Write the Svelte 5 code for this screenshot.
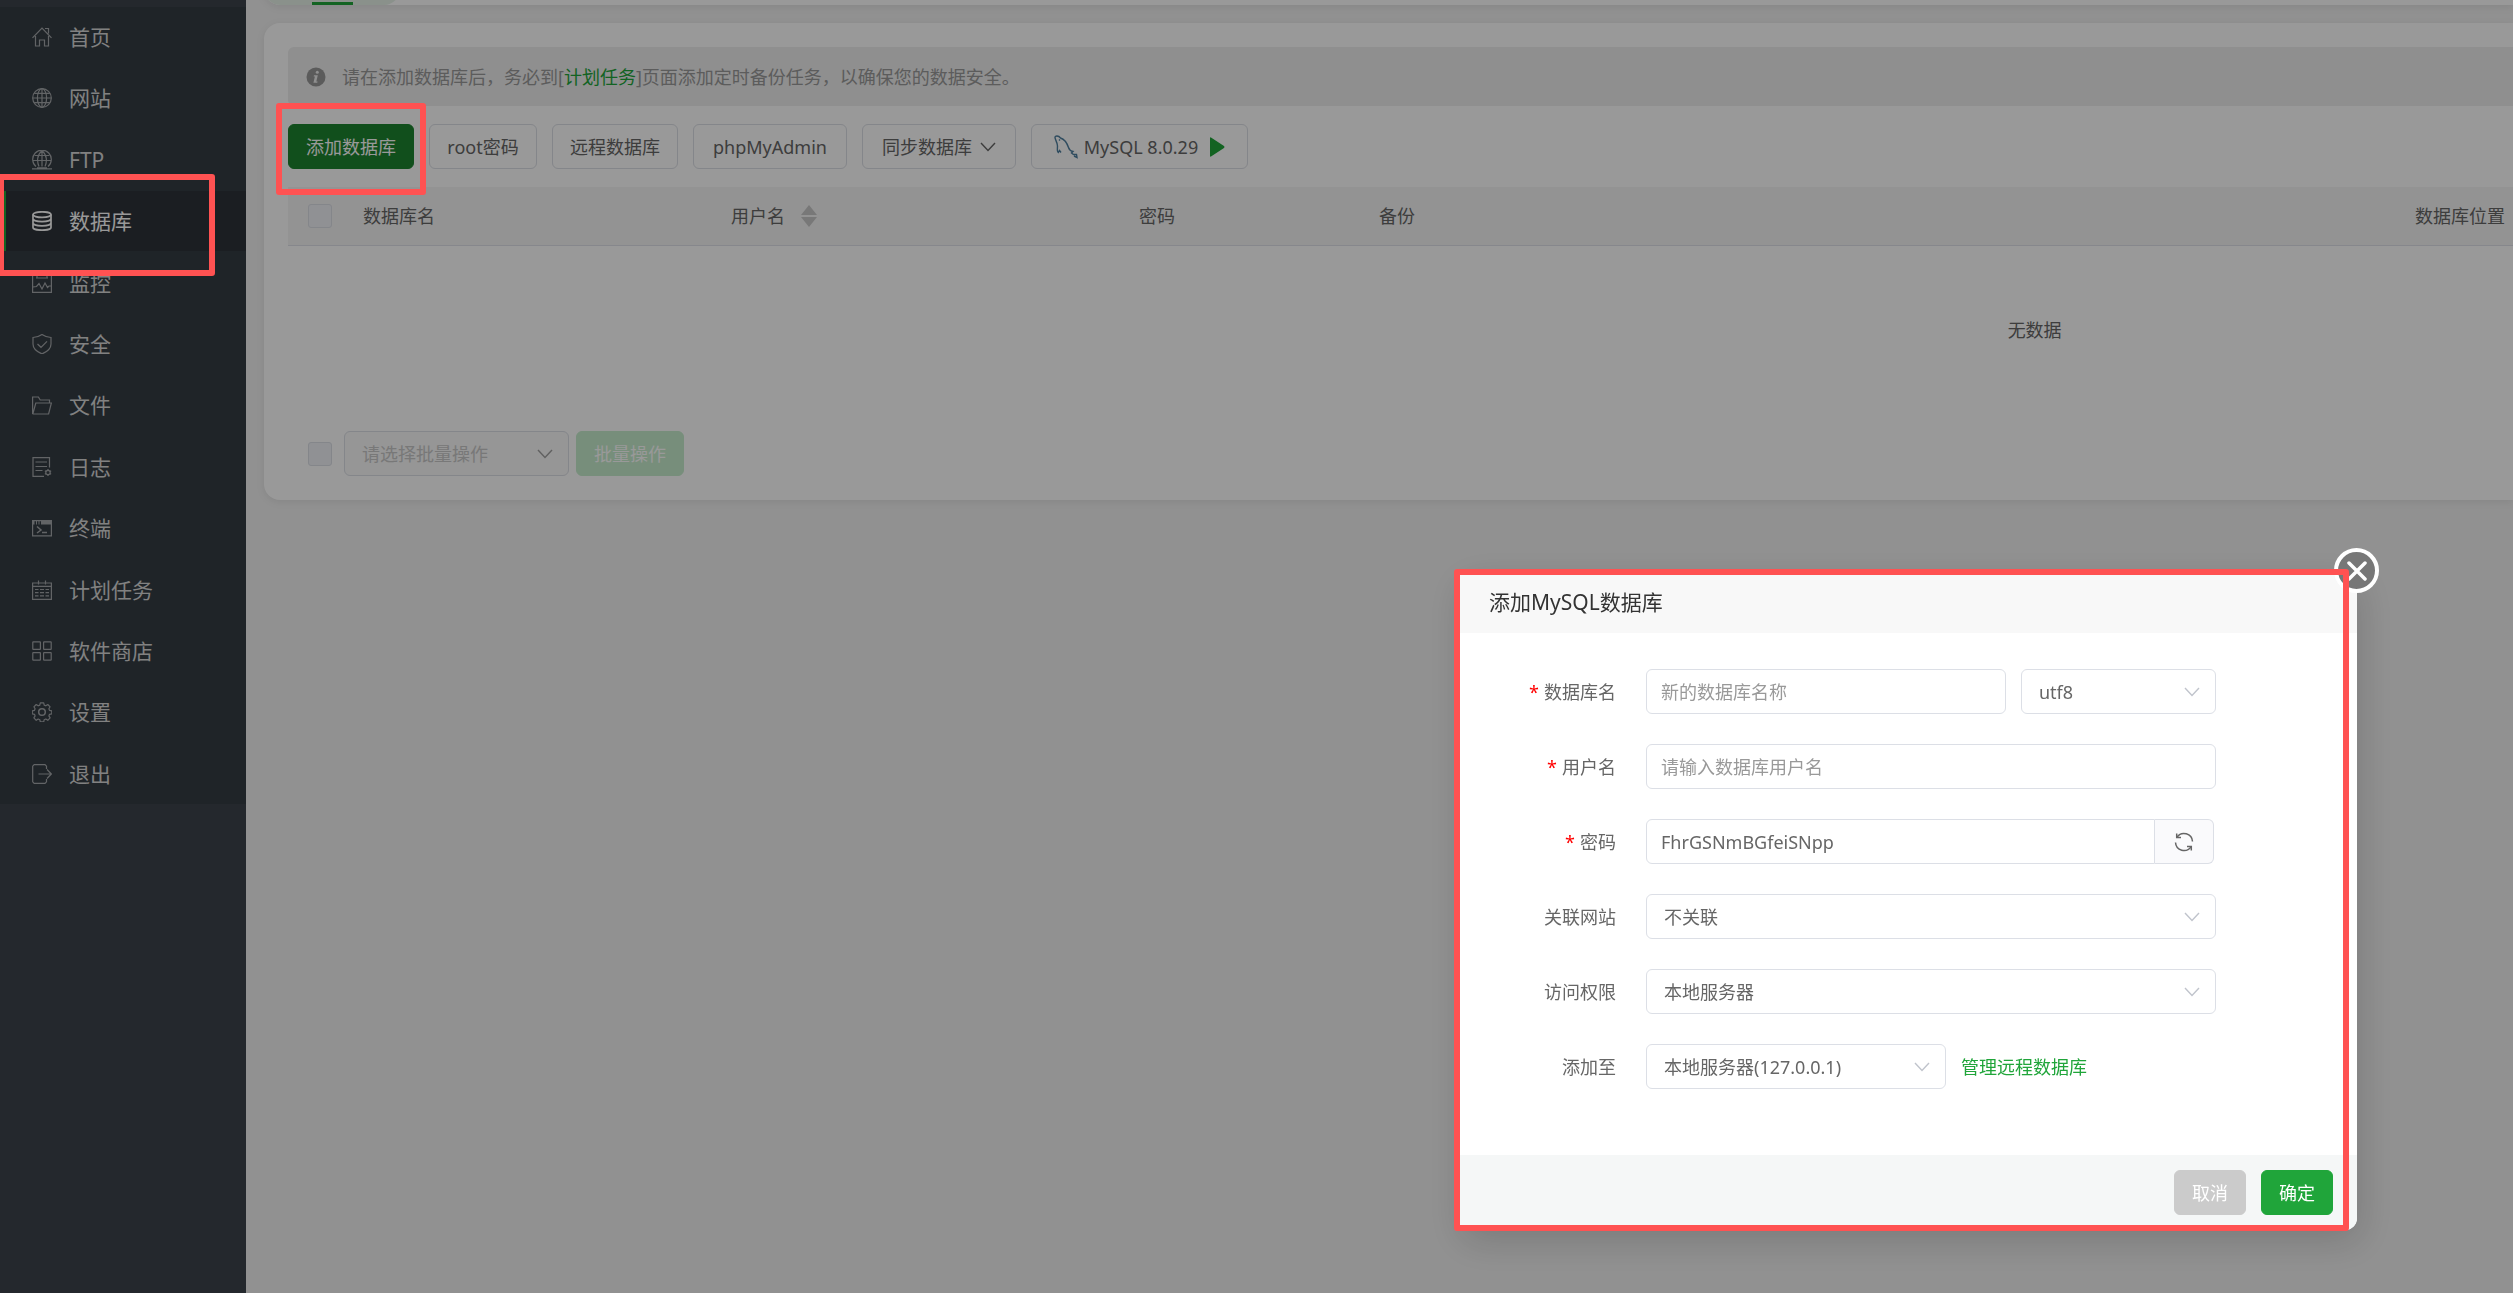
<script>
	const menu = [
		{ id: 'home', title: '首页' },
		{ id: 'site', title: '网站' },
		{ id: 'ftp', title: 'FTP' },
		{ id: 'database', title: '数据库' },
		{ id: 'monitor', title: '监控' },
		{ id: 'security', title: '安全' },
		{ id: 'files', title: '文件' },
		{ id: 'logs', title: '日志' },
		{ id: 'terminal', title: '终端' },
		{ id: 'cron', title: '计划任务' },
		{ id: 'store', title: '软件商店' },
		{ id: 'settings', title: '设置' },
		{ id: 'logout', title: '退出' }
	];

	let active = 'database';
	let showModal = true;

	let dbName = '';
	let userName = '';
	let password = 'FhrGSNmBGfeiSNpp';

	function refreshPassword() {
		const chars = 'ABCDEFGHJKMNPQRSTWXYZabcdefhijkmnprstwxyz2345678';
		password = Array.from({ length: 16 }, () => chars[Math.floor(Math.random() * chars.length)]).join('');
	}
</script>

{#snippet chevron()}
	<svg class="chevron" width="16" height="10" viewBox="0 0 16 10" fill="none" stroke="currentColor" stroke-width="1.4">
		<path d="M1 1l7 7.5L15 1" />
	</svg>
{/snippet}

{#snippet menuIcon(id)}
	<svg class="icon" width="20" height="20" viewBox="0 0 20 20" fill="none" stroke="currentColor" stroke-width="1.2">
		{#if id === 'home'}
			<path d="M.5 10.8L10 1l9.500 9.800M13 1.500h3.500v5M3.500 9v10h4v-6h5v6h4V9" />
		{:else if id === 'site'}
			<circle cx="10" cy="10" r="9.300" />
			<ellipse cx="10" cy="10" rx="4.600" ry="9.300" />
			<path d="M10 .7v18.600M.7 10h18.600M2.200 5.300h15.600M2.200 14.700h15.600" />
		{:else if id === 'ftp'}
			<path d="M4 16.500A9.300 9.300 0 1 1 16 16.500" />
			<path d="M7 16.500c-2.300-5-2-12 3-15.800 5 3.800 5.300 10.800 3 15.800M10 .7v15.800M1 10.500h18M2.600 5.500h14.800" />
			<path d="M0 18.800h20M5 17.800h10" />
		{:else if id === 'database'}
			<g stroke-width="1.700">
				<ellipse cx="10" cy="3.600" rx="9" ry="2.800" />
				<path d="M1 3.600v12.800c0 1.600 4 2.800 9 2.800s9-1.200 9-2.800V3.600M1 7.800c0 1.600 4 2.800 9 2.800s9-1.200 9-2.800M1 12.100c0 1.600 4 2.800 9 2.800s9-1.200 9-2.800" />
			</g>
		{:else if id === 'monitor'}
			<path d="M.6 1.600h18.800v17.800H.6zM4 5h12M5 1.600v3.400M15 1.600v3.400M1 14l3.500-.5 2.500-3 3 5.500 3-6 2.500 4.500 1.500-1.500h2" />
		{:else if id === 'security'}
			<path d="M10 .6c2.800 2 5.800 2.700 9 2.900v6.500c0 4.500-4 7.800-9 9.900-5-2.100-9-5.400-9-9.900V3.500C4.200 3.300 7.200 2.600 10 .6zM5.500 10l3.500 3.300 6-6" />
		{:else if id === 'files'}
			<path d="M.6 19V2h5.800l1.800 3h9.300v2.800M.6 19h16l2.800-11H3.800L.8 19" />
		{:else if id === 'logs'}
			<path d="M12 19.400H1V.6h16.500v10M3.500 5h11.500M3.500 9.500h11.500M3.500 13.500h7" />
			<circle cx="16" cy="15.500" r="2.200" />
			<path d="M16 12v1.200M16 17.800V19M12.900 13.700l1.100.7M18 16.600l1.100.7M12.900 17.300l1.100-.7M18 14.400l1.100-.7" />
		{:else if id === 'terminal'}
			<path d="M.6 2.600h18.800v15.300H.6z" />
			<path d="M1 4.700h1.500M4 4.700h1M6.500 4.700h1M9 4.700h11" stroke-width="3.600" />
			<path d="M5 8.500l4 3.500-4 3M10 14.500h5" stroke-width="1.500" />
		{:else if id === 'cron'}
			<path d="M.6 3h18.800v16.400H.6zM6.500.5v4M13.500.5v4M.6 6.300h18.800M3 9.500h3.500M8 9.500h4M13.500 9.500H17M3 12.700h3.500M8 12.700h4M13.500 12.700H17M3 15.900h3.500M8 15.900h4M13.500 15.900H17" />
		{:else if id === 'store'}
			<rect x=".8" y=".8" width="7.600" height="7.600" rx=".5" />
			<rect x="11.600" y=".8" width="7.600" height="7.600" rx=".5" />
			<rect x=".8" y="11.600" width="7.600" height="7.600" rx=".5" />
			<rect x="11.600" y="11.600" width="7.600" height="7.600" rx=".5" />
		{:else if id === 'settings'}
			<circle cx="10" cy="10" r="3.300" stroke-width="1.500" />
			<path d="M8.300.8h3.400l.5 2.300 1.600.7 2-1.300 2.300 2.300-1.200 2 .6 1.600 2.300.5v2.900l-2.300.5-.6 1.600 1.200 2-2.300 2.400-2-1.300-1.600.7-.5 2.200H8.300l-.5-2.200-1.600-.7-2 1.300-2.300-2.400 1.200-2-.6-1.600-2.200-.5V8.900l2.200-.5.6-1.600-1.200-2 2.300-2.300 2 1.300 1.600-.7z" stroke-linejoin="round" />
		{:else if id === 'logout'}
			<path d="M14.500 5V2.200L13 .7H2.200L.7 2.200v15.600l1.500 1.500H13l1.500-1.500V15M6.500 10h12.500M15 5.500l4.300 4.500-4.300 4.500" />
		{/if}
	</svg>
{/snippet}

<div class="layout">
	<aside class="sidebar">
		<ul class="menu">
			{#each menu as item}
				<li class="menu-item" class:active={item.id === active}>
					<a href="#{item.id}">
						{@render menuIcon(item.id)}
						<span>{item.title}</span>
					</a>
					{#if item.id === 'database'}
						<div class="mark mark-menu"></div>
					{/if}
				</li>
			{/each}
		</ul>
	</aside>

	<main class="main">
		<div class="tabs">
			<div class="tab"></div>
		</div>

		<section class="panel">
			<div class="notice">
				<svg width="20" height="20" viewBox="0 0 20 20">
					<circle cx="10" cy="10" r="9.500" fill="#989898" />
					<circle cx="11.300" cy="5.200" r="1.500" fill="#eee" />
					<path d="M8 8.300h3.800l-1.500 6.200h1.300l-.3 1.200H7.400l1.500-6.200H7.700z" fill="#eee" />
				</svg>
				<p>请在添加数据库后，务必到[<a href="#cron">计划任务</a>]页面添加定时备份任务，以确保您的数据安全。</p>
			</div>

			<div class="toolbar">
				<div class="marked">
					<button class="btn btn-add" on:click={() => (showModal = true)}>添加数据库</button>
					<div class="mark mark-add"></div>
				</div>
				<button class="btn btn-root">root密码</button>
				<button class="btn">远程数据库</button>
				<button class="btn btn-admin">phpMyAdmin</button>
				<button class="btn btn-sync">同步数据库 {@render chevron()}</button>
				<button class="btn btn-mysql">
					<svg width="24" height="24" viewBox="0 0 24 24" fill="none" stroke="#4f7f9f" stroke-width="1.400">
						<path d="M7 17.500l-1.500-2-1.200 2C2.800 16.500 3.500 13 3.500 11 3.500 7.500 1 4.500 1 2.500 1 .5 4.500.5 6.500 3c4.500 1.500 6.500 5 8 9.500.8 2.500 2 3.500 4.500 4l-1.500 1.500 2 1.500h3l.5 3-3-1.500" />
						<path d="M5 4.500l1 1" />
					</svg>
					MySQL 8.0.29
					<svg width="15" height="20" viewBox="0 0 15 20"><path d="M0 1q0-1 1-.5l13 8.500q1 1 0 2L1 19.500q-1 .5-1-.5z" fill="#20a53a" /></svg>
				</button>
			</div>

			<table class="table">
				<colgroup>
					<col class="col-check" />
					<col class="col-name" />
					<col class="col-user" />
					<col class="col-pass" />
					<col class="col-backup" />
					<col />
				</colgroup>
				<thead>
					<tr>
						<th class="check"><input type="checkbox" aria-label="全选" /></th>
						<th>数据库名</th>
						<th>
							<span class="sort">
								用户名
								<svg width="16" height="22" viewBox="0 0 16 22" fill="#c8c8c8"><path d="M8 0l8 10H0zM8 22l8-10H0z" /></svg>
							</span>
						</th>
						<th>密码</th>
						<th>备份</th>
						<th>数据库位置</th>
					</tr>
				</thead>
				<tbody>
					<tr>
						<td class="empty" colspan="6">无数据</td>
					</tr>
				</tbody>
			</table>

			<div class="batch">
				<input type="checkbox" aria-label="选择全部数据库" />
				<div class="select select-batch">
					<select disabled aria-label="批量操作">
						<option>请选择批量操作</option>
					</select>
					{@render chevron()}
				</div>
				<button class="btn btn-batch" disabled>批量操作</button>
			</div>
		</section>
	</main>
</div>

{#if showModal}
	<div class="mask"></div>

	<div class="modal" role="dialog" aria-labelledby="modal-title">
		<h2 class="modal-title" id="modal-title">添加MySQL数据库</h2>

		<div class="form">
			<div class="row">
				<label for="db-name"><i>*</i>数据库名</label>
				<div class="field">
					<input class="input" id="db-name" type="text" placeholder="新的数据库名称" bind:value={dbName} />
					<div class="select select-charset">
						<select aria-label="字符集">
							<option>utf8</option>
						</select>
						{@render chevron()}
					</div>
				</div>
			</div>
			<div class="row">
				<label for="db-user"><i>*</i>用户名</label>
				<div class="field">
					<input class="input" id="db-user" type="text" placeholder="请输入数据库用户名" bind:value={userName} />
				</div>
			</div>
			<div class="row">
				<label for="db-pass"><i>*</i>密码</label>
				<div class="field field-pass">
					<input class="input" id="db-pass" type="text" bind:value={password} />
					<button class="refresh" aria-label="随机密码" on:click={refreshPassword}>
						<svg width="20" height="20" viewBox="0 0 20 20" fill="none" stroke="currentColor" stroke-width="1.500">
							<path d="M3 5.200A8.500 8.500 0 0 1 18.500 9.500M17 14.800A8.500 8.500 0 0 1 1.500 10.500" />
							<path d="M2.700 1.500v4h4.300M17.300 18.500v-4H13" />
						</svg>
					</button>
				</div>
			</div>
			<div class="row">
				<label for="db-site">关联网站</label>
				<div class="field">
					<div class="select">
						<select id="db-site"><option>不关联</option></select>
						{@render chevron()}
					</div>
				</div>
			</div>
			<div class="row">
				<label for="db-access">访问权限</label>
				<div class="field">
					<div class="select">
						<select id="db-access"><option>本地服务器</option></select>
						{@render chevron()}
					</div>
				</div>
			</div>
			<div class="row">
				<label for="db-server">添加至</label>
				<div class="field">
					<div class="select select-server">
						<select id="db-server"><option>本地服务器(127.0.0.1)</option></select>
						{@render chevron()}
					</div>
					<a href="#remote">管理远程数据库</a>
				</div>
			</div>
		</div>

		<div class="modal-footer">
			<button class="btn btn-cancel" on:click={() => (showModal = false)}>取消</button>
			<button class="btn btn-ok">确定</button>
		</div>

		<button class="close" aria-label="关闭" on:click={() => (showModal = false)}>
			<svg width="20" height="20" viewBox="0 0 20 20" stroke="#fff" stroke-width="3.500" stroke-linecap="round">
				<path d="M2 2l16 16M18 2L2 18" />
			</svg>
		</button>
		<div class="mark mark-modal"></div>
	</div>
{/if}

<style>
	:global(body) {
		margin: 0;
		background: #f2f2f2;
		color: #666;
		font-family: 'Noto Sans', 'Noto Sans CJK SC', sans-serif;
		font-size: 18px;
		line-height: 24px;
	}

	* {
		box-sizing: border-box;
	}

	a {
		color: #20a53a;
		text-decoration: none;
	}

	button,
	input,
	select {
		font: inherit;
		color: inherit;
	}

	.layout {
		display: flex;
		min-height: 100vh;
	}

	/* sidebar */
	.sidebar {
		flex: 0 0 246px;
		padding-top: 7px;
		background: #3c444b;
	}

	.menu {
		display: flex;
		flex-direction: column;
		justify-content: space-between;
		height: 797px;
		margin: 0;
		padding: 0;
		background: #353d44;
		list-style: none;
	}

	.menu-item {
		position: relative;
		height: 60px;
	}

	.menu-item a {
		display: flex;
		align-items: center;
		gap: 17px;
		height: 60px;
		padding-left: 32px;
		color: #d8d8d8;
		font-size: 21px;
	}

	.menu-item .icon {
		color: #a4a7aa;
	}

	.menu-item.active a {
		padding-left: 26px;
		border-left: 6px solid #20a53a;
		background: #2e3239;
		color: #fff;
	}

	.menu-item.active .icon {
		color: #fff;
	}

	/* main */
	.main {
		flex: 1;
		min-width: 0;
		padding-left: 18px;
		overflow: hidden;
	}

	/* the tab bar is scrolled up, only its lower edge stays in view */
	.tabs {
		height: 24px;
		margin: -19px 0 18px;
		border-radius: 0 0 0 16px;
		background: #fff;
		box-shadow: 0 2px 8px rgba(0, 0, 0, 0.08);
		overflow: hidden;
	}

	.tab {
		width: 136px;
		height: 24px;
		padding: 21px 47px 0 48px;
		border-radius: 0 0 16px 16px;
		background: #e6f2e8;
	}

	.tab::after {
		content: '';
		display: block;
		height: 3px;
		background: #20a53a;
	}

	.panel {
		padding: 24px 0 24px 24px;
		border-radius: 16px 0 0 16px;
		background: #fff;
		box-shadow: 0 2px 8px rgba(0, 0, 0, 0.08);
	}

	.notice {
		display: flex;
		align-items: center;
		gap: 16px;
		height: 59px;
		padding-left: 18px;
		border-radius: 6px 0 0 6px;
		background: #eee;
		color: #999;
	}

	.notice p {
		margin: 0;
	}

	.toolbar {
		display: flex;
		gap: 15px;
		padding: 18px 0;
	}

	.btn {
		display: flex;
		align-items: center;
		justify-content: center;
		height: 45px;
		padding: 0 17px;
		border: 1px solid #dcdfe6;
		border-radius: 6px;
		background: #fff;
		white-space: nowrap;
	}

	.btn-root {
		min-width: 108px;
	}

	.btn-admin,
	.btn-sync {
		min-width: 154px;
	}

	.btn-sync {
		gap: 8px;
	}

	.btn-mysql {
		gap: 6px;
		min-width: 217px;
	}

	.btn-mysql svg:last-child {
		margin-left: 6px;
	}

	.marked {
		position: relative;
	}

	.btn-add {
		border-color: #1d8430;
		background: #1d8430;
		color: #fff;
	}

	.table {
		width: 157%;
		border-collapse: collapse;
		table-layout: fixed;
	}

	.col-check {
		width: 75px;
	}

	.col-name {
		width: 368px;
	}

	.col-user {
		width: 408px;
	}

	.col-pass {
		width: 240px;
	}

	.col-backup {
		width: 1036px;
	}

	th {
		height: 58px;
		padding: 0;
		border-bottom: 1px solid #dfe2ea;
		background: #f5f5f5;
		font-weight: normal;
		text-align: left;
	}

	.check {
		padding-left: 20px;
	}

	.sort {
		display: flex;
		align-items: center;
		gap: 16px;
	}

	.empty {
		height: 170px;
		padding: 0;
		text-align: center;
	}

	input[type='checkbox'] {
		display: block;
		width: 24px;
		height: 24px;
		margin: 0;
		border: 1px solid #dcdfe6;
		border-radius: 3px;
		background: #f0f2f7;
		appearance: none;
	}

	.batch {
		display: flex;
		align-items: center;
		padding: 16px 0 0 20px;
	}

	.select {
		position: relative;
		flex: 1;
		color: #666;
	}

	.select select {
		display: block;
		width: 100%;
		height: 45px;
		padding: 0 40px 0 17px;
		border: 1px solid #dcdfe6;
		border-radius: 6px;
		background: #fff;
		appearance: none;
	}

	.select .chevron {
		position: absolute;
		top: 18px;
		right: 16px;
		color: #c0c4cc;
		pointer-events: none;
	}

	.select-batch {
		flex: 0 0 225px;
		margin: 0 7px 0 12px;
	}

	.select-batch select {
		background: #fafafa;
		color: #c8c8c8;
		opacity: 1;
	}

	.select-batch .chevron {
		color: #a0a0a0;
	}

	.btn-batch {
		border-color: #c6edcd;
		background: #c6edcd;
		color: #fff;
	}

	/* add database dialog */
	.mask {
		position: fixed;
		inset: 0;
		z-index: 10;
		background: rgba(0, 0, 0, 0.4);
	}

	.modal {
		position: fixed;
		top: 570px;
		right: 156px;
		z-index: 20;
		width: 900px;
		border-radius: 12px;
		background: #fff;
		box-shadow: 4px 12px 36px rgba(0, 0, 0, 0.16);
	}

	.modal-title {
		margin: 0;
		padding: 18px 32px 17px;
		border-radius: 12px 12px 0 0;
		background: #f8f8f8;
		color: #333;
		font-size: 21px;
		font-weight: normal;
		line-height: 28px;
	}

	.form {
		display: flex;
		flex-direction: column;
		gap: 30px;
		padding: 36px 141px 66px 0;
	}

	.row {
		display: flex;
		align-items: center;
		gap: 30px;
	}

	.row label {
		width: 159px;
		text-align: right;
	}

	.row i {
		margin-right: 5px;
		color: #f00;
		font-style: normal;
	}

	.field {
		display: flex;
		flex: 1;
		align-items: center;
		gap: 15px;
	}

	.input {
		flex: 1;
		min-width: 0;
		height: 45px;
		padding: 0 14px;
		border: 1px solid #dcdfe6;
		border-radius: 6px;
		background: #fff;
		outline: none;
	}

	.input::placeholder {
		color: #999;
	}

	.field-pass {
		gap: 0;
		padding-right: 2px;
	}

	.field-pass .input {
		border-radius: 6px 0 0 6px;
	}

	.refresh {
		display: flex;
		align-items: center;
		justify-content: center;
		width: 59px;
		height: 45px;
		border: 1px solid #dcdfe6;
		border-left: 0;
		border-radius: 0 6px 6px 0;
		background: #fafafc;
	}

	.select-charset {
		flex: 0 0 195px;
	}

	.select-server {
		flex: 0 0 300px;
	}

	.modal-footer {
		display: flex;
		justify-content: flex-end;
		gap: 15px;
		padding: 15px 24px;
		border-radius: 0 0 12px 12px;
		background: #f5f7f7;
	}

	.btn-cancel {
		border-color: #cbcbcb;
		background: #cbcbcb;
		color: #fff;
	}

	.btn-ok {
		border-color: #20a53a;
		background: #20a53a;
		color: #fff;
	}

	.close {
		position: absolute;
		top: -22px;
		right: -22px;
		display: flex;
		align-items: center;
		justify-content: center;
		width: 45px;
		height: 45px;
		padding: 0;
		border: 4px solid #fff;
		border-radius: 50%;
		background: #777;
	}

	/* red highlight boxes */
	.mark {
		position: absolute;
		z-index: 30;
		border: 6px solid #ff5252;
		border-radius: 3px;
		pointer-events: none;
	}

	.mark-menu {
		inset: -17px 31px -25px -2px;
	}

	.mark-add {
		inset: -21px -12px -26px;
	}

	.mark-modal {
		inset: -1px 8px -1px -3px;
	}
</style>
